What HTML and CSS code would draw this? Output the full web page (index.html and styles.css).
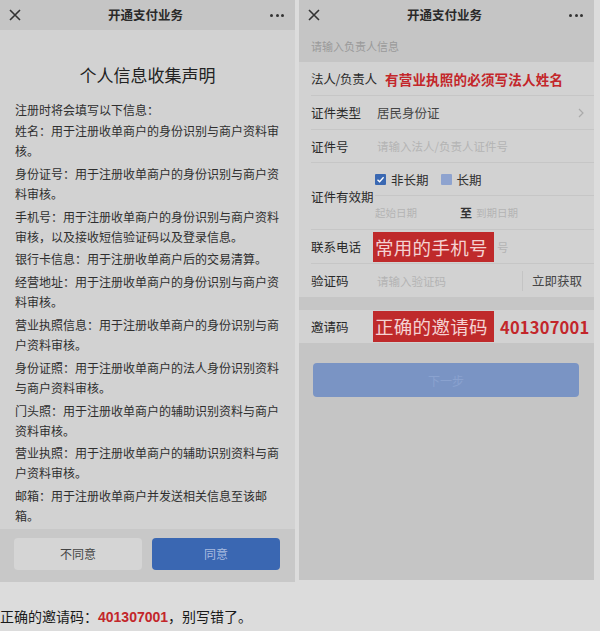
FILE: index.html
```html
<!DOCTYPE html>
<html lang="zh">
<head>
<meta charset="utf-8">
<link rel="stylesheet" href="styles.css">
</head>
<body>
<div class="screens">
  <section class="panel">
    <header class="topbar">
      <svg class="close" width="12" height="12" viewBox="0 0 12 12"><path d="M1 1L11 11M11 1L1 11" stroke="#333" stroke-width="1.6" fill="none"/></svg>
      <div class="title">开通支付业务</div>
      <div class="dots"><span></span><span></span><span></span></div>
    </header>
    <div class="decl">
      <h1>个人信息收集声明</h1>
      <p class="intro">注册时将会填写以下信息：</p>
      <p>姓名：用于注册收单商户的身份识别与商户资料审核。</p>
      <p>身份证号：用于注册收单商户的身份识别与商户资料审核。</p>
      <p>手机号：用于注册收单商户的身份识别与商户资料审核，以及接收短信验证码以及登录信息。</p>
      <p>银行卡信息：用于注册收单商户后的交易清算。</p>
      <p>经营地址：用于注册收单商户的身份识别与商户资料审核。</p>
      <p>营业执照信息：用于注册收单商户的身份识别与商户资料审核。</p>
      <p>身份证照：用于注册收单商户的法人身份识别资料与商户资料审核。</p>
      <p>门头照：用于注册收单商户的辅助识别资料与商户资料审核。</p>
      <p>营业执照：用于注册收单商户的辅助识别资料与商户资料审核。</p>
      <p>邮箱：用于注册收单商户并发送相关信息至该邮箱。</p>
    </div>
    <footer class="actions">
      <button class="btn ghost">不同意</button>
      <button class="btn primary">同意</button>
    </footer>
  </section>

  <section class="panel">
    <header class="topbar">
      <svg class="close" width="12" height="12" viewBox="0 0 12 12"><path d="M1 1L11 11M11 1L1 11" stroke="#333" stroke-width="1.6" fill="none"/></svg>
      <div class="title">开通支付业务</div>
      <div class="dots"><span></span><span></span><span></span></div>
    </header>
    <div class="sub">请输入负责人信息</div>
    <div class="form">
      <div class="row h34">
        <span class="label wide">法人/负责人</span>
        <span class="note">有营业执照的必须写法人姓名</span>
      </div>
      <div class="row h34">
        <span class="label">证件类型</span>
        <span class="value">居民身份证</span>
        <svg class="chev" width="6" height="10" viewBox="0 0 6 10"><path d="M1 1L5 5L1 9" stroke="#aaa" stroke-width="1.2" fill="none"/></svg>
      </div>
      <div class="row h33">
        <span class="label">证件号</span>
        <span class="ph">请输入法人/负责人证件号</span>
      </div>
      <div class="row validity">
        <span class="label">证件有效期</span>
        <div class="vcol">
          <div class="checks">
            <span class="cb on"><svg width="11" height="11" viewBox="0 0 11 11"><path d="M2.5 5.8L4.6 7.8L8.6 3.2" stroke="#fff" stroke-width="1.3" fill="none"/></svg></span>
            <span class="cbtext">非长期</span>
            <span class="cb off"></span>
            <span class="cbtext">长期</span>
          </div>
          <div class="dates">
            <span class="ph">起始日期</span>
            <span class="to">至</span>
            <span class="ph">到期日期</span>
          </div>
        </div>
      </div>
      <div class="row h34">
        <span class="label">联系电话</span>
        <span class="stamp">常用的手机号</span>
        <span class="ph tail">号</span>
      </div>
      <div class="row h33 last">
        <span class="label">验证码</span>
        <span class="ph grow">请输入验证码</span>
        <span class="get">立即获取</span>
      </div>
    </div>
    <div class="band"></div>
    <div class="row invite">
      <span class="label">邀请码</span>
      <span class="stamp">正确的邀请码</span>
      <span class="code">401307001</span>
    </div>
    <div class="submit-area">
      <button class="btn next">下一步</button>
    </div>
  </section>
</div>
<p class="caption">正确的邀请码：<b>401307001</b>，别写错了。</p>
</body>
</html>
```

FILE: styles.css
```css
* { box-sizing: border-box; }
html, body { margin: 0; padding: 0; }
body {
  width: 600px;
  height: 631px;
  background: #dcdcdc;
  font-family: "Noto Sans CJK SC", "Noto Sans", sans-serif;
  color: #333;
  overflow: hidden;
}
.screens {
  display: flex;
  gap: 4px;
  height: 580px;
}
.panel {
  width: 295px;
  height: 580px;
  background: #d2d2d2;
  display: flex;
  flex-direction: column;
}
.topbar {
  height: 30px;
  flex: none;
  background: #c5c5c5;
  display: flex;
  align-items: center;
  padding: 0 11px 0 9px;
}
.close { flex: none; }
.title {
  flex: 1;
  text-align: center;
  font-size: 12.5px;
  font-weight: bold;
  color: #2a2a2a;
  line-height: 16px;
}
.dots { display: flex; gap: 2.5px; }
.dots span { width: 3px; height: 3px; border-radius: 50%; background: #333; }

.decl {
  flex: 1;
  padding: 0 15px;
}
.decl h1 {
  margin: 33px 0 13px;
  text-align: center;
  font-size: 17px;
  font-weight: normal;
  line-height: 24px;
  color: #222;
}
.decl p {
  margin: 0 0 2.8px;
  width: 268px;
  font-size: 12px;
  line-height: 20px;
  color: #2f2f2f;
}
.decl p.intro { margin-bottom: 1px; }

.actions {
  flex: none;
  height: 53px;
  background: #c8c8c8;
  display: flex;
  gap: 10px;
  padding: 9px 14px 0;
}
.btn {
  border: none;
  font-family: inherit;
  border-radius: 4px;
  height: 32px;
  width: 128px;
  font-size: 12px;
  padding: 0;
}
.btn.ghost { background: #d5d5d5; color: #444; }
.btn.primary { background: #3a67b2; color: #a9bce0; }

.sub {
  height: 32px;
  flex: none;
  background: #c5c5c5;
  font-size: 11px;
  color: #9a9a9a;
  line-height: 33px;
  padding-left: 12px;
}
.form { padding-left: 12px; }
.row {
  display: flex;
  align-items: center;
  border-bottom: 1px solid #c6c6c6;
  font-size: 12.5px;
  white-space: nowrap;
}
.row.h34 { height: 34px; }
.row.h33 { height: 33px; }
.row.last { border-bottom: none; }
.label {
  width: 66px;
  flex: none;
  color: #2a2a2a;
  font-size: 12.5px;
  white-space: nowrap;
}
.label.wide { width: 74px; letter-spacing: -0.3px; }
.note {
  color: #c3262a;
  font-weight: bold;
  font-size: 13.5px;
  letter-spacing: 0.2px;
}
.value { color: #444; }
.chev { margin-left: auto; margin-right: 10px; }
.ph { color: #b4b4b4; font-size: 11.5px; }
.grow { flex: 1; }
.get {
  border-left: 1px solid #c4c4c4;
  height: 20px;
  line-height: 20px;
  padding: 0 12px 0 9px;
  color: #444;
  font-size: 12.5px;
}

.validity { height: 67px; align-items: stretch; }
.validity .label { align-self: center; }
.vcol { flex: 1; display: flex; flex-direction: column; margin-left: -2px; }
.checks {
  height: 33px;
  display: flex;
  align-items: center;
  border-bottom: 1px solid #c6c6c6;
}
.cb {
  width: 11px;
  height: 11px;
  border-radius: 1px;
  display: inline-flex;
}
.cb.on { background: #3a68b2; }
.cb.off { background: #8ea3cf; }
.cbtext { margin: 0 12px 0 5px; color: #2e2e2e; font-size: 12.5px; }
.dates {
  flex: 1;
  display: flex;
  align-items: center;
}
.dates .ph { font-size: 10.5px; }
.dates .to { margin: 0 4px 0 43px; font-weight: bold; color: #333; font-size: 12px; }

.stamp {
  flex: none;
  background: #bf2a2b;
  color: #f4d2d2;
  font-size: 18.5px;
  height: 30px;
  line-height: 30px;
  width: 121px;
  padding: 0 2px;
  margin-left: -4px;
  letter-spacing: 0.3px;
  white-space: nowrap;
  overflow: hidden;
}
.tail { margin-left: 3px; }

.band { height: 13px; background: #c6c6c6; flex: none; }
.invite {
  height: 33px;
  border-bottom: none;
  padding-left: 12px;
  flex: none;
}
.invite .stamp { height: 31px; line-height: 31px; margin-left: -4px; }
.code {
  margin-left: 6px;
  color: #c3262a;
  font-weight: bold;
  font-size: 16.5px;
  letter-spacing: 0.2px;
}
.submit-area {
  flex: 1;
  background: #c5c5c5;
  padding: 20px 15px 0 14px;
}
.btn.next {
  width: 100%;
  height: 34px;
  background: #7a94c4;
  color: #8aa2cf;
  font-size: 12px;
}

.caption {
  margin: 0;
  height: 51px;
  padding-top: 26px;
  font-size: 14px;
  line-height: 20px;
  color: #1a1a1a;
}
.caption b { color: #c3262a; font-family: "Liberation Sans", sans-serif; font-weight: bold; }
```
